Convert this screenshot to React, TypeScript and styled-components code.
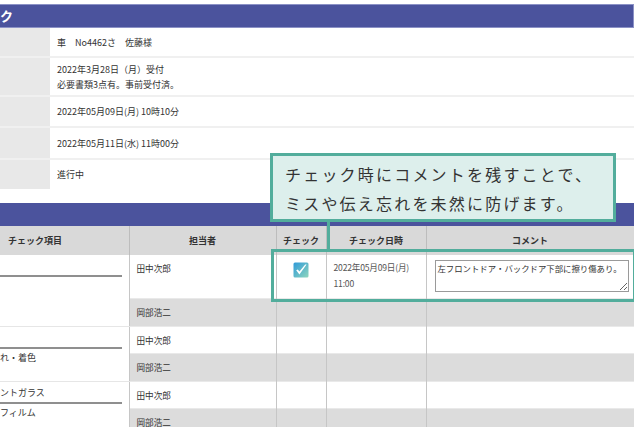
import React from 'react';
import styled, { createGlobalStyle } from 'styled-components';

const GlobalStyle = createGlobalStyle`
  body {
    margin: 0;
    background: #fff;
    font-family: 'Noto Sans CJK JP', 'Noto Sans', sans-serif;
    color: #333;
  }
`;

const infoRows = [
  { height: 30, lines: ['車　No4462さ　佐藤様'] },
  { height: 39, lines: ['2022年3月28日（月）受付', '必要書類3点有。事前受付済。'] },
  { height: 31, lines: ['2022年05月09日(月) 10時10分'] },
  { height: 32, lines: ['2022年05月11日(水) 11時00分'] },
  { height: 29, lines: ['進行中'] },
];

const groups = [
  { title: '', sub: '', first: true },
  { title: '', sub: 'れ・着色', first: false },
  { title: 'ントガラス', sub: 'フィルム', first: false },
];

const CheckIcon = () => (
  <svg width="16" height="16" viewBox="0 0 16 16">
    <defs>
      <linearGradient id="chk" x1="0" y1="0" x2="1" y2="1">
        <stop offset="0" stopColor="#2f9ad8" />
        <stop offset="1" stopColor="#8fd6bd" />
      </linearGradient>
    </defs>
    <rect x="0.5" y="0.5" width="15" height="15" rx="1.5" fill="url(#chk)" />
    <path
      d="M3.2 8.2 L6.4 12.4 L13.6 2.6 L12.2 2.6 L6.4 9.6 L4.8 7.4 Z"
      fill="#fff"
    />
  </svg>
);

const App = () => {
  return (
    <>
      <GlobalStyle />
      <Page>
        <TitleBar>ク</TitleBar>
        <InfoList>
          {infoRows.map((row, i) => (
            <InfoRow key={i} $height={row.height} $last={i === infoRows.length - 1}>
              <InfoLabel />
              <InfoValue>
                {row.lines.map((line) => (
                  <div key={line}>{line}</div>
                ))}
              </InfoValue>
            </InfoRow>
          ))}
        </InfoList>

        <SectionBar />
        <Table>
          <colgroup>
            <col style={{ width: 129 }} />
            <col style={{ width: 147 }} />
            <col style={{ width: 50 }} />
            <col style={{ width: 100 }} />
            <col style={{ width: 208 }} />
          </colgroup>
          <thead>
            <tr>
              <Th $align="left">チェック項目</Th>
              <Th>担当者</Th>
              <Th>チェック</Th>
              <Th>チェック日時</Th>
              <Th>コメント</Th>
            </tr>
          </thead>
          <tbody>
            {groups.map((g, gi) => (
              <React.Fragment key={gi}>
                <Tr $height={g.first ? 43 : 27}>
                  <ItemCell rowSpan={2}>
                    <ItemTitle>{g.title}</ItemTitle>
                    <ItemSub>{g.sub}</ItemSub>
                  </ItemCell>
                  <Td>田中次郎</Td>
                  <Td $center>{g.first && <CheckIcon />}</Td>
                  <DateCell>
                    {g.first && (
                      <>
                        <div>2022年05月09日(月)</div>
                        <div>11:00</div>
                      </>
                    )}
                  </DateCell>
                  <CommentCell>
                    {g.first && (
                      <Comment readOnly defaultValue="左フロントドア・バックドア下部に擦り傷あり。" />
                    )}
                  </CommentCell>
                </Tr>
                <Tr $height={28} $shade>
                  <Td>岡部浩二</Td>
                  <Td />
                  <Td />
                  <Td />
                </Tr>
              </React.Fragment>
            ))}
          </tbody>
        </Table>

        <Callout>
          チェック時にコメントを残すことで、
          <br />
          ミスや伝え忘れを未然に防げます。
        </Callout>
        <Connector />
        <Highlight />
      </Page>
    </>
  );
};

const Page = styled.div`
  position: relative;
  width: 634px;
  height: 427px;
  overflow: hidden;
  padding-top: 4px;
  box-sizing: border-box;
`;

const TitleBar = styled.div`
  height: 22px;
  background: #4b539d;
  border: 1px solid #8c92c6;
  border-left: none;
  color: #fff;
  font-size: 13px;
  font-weight: bold;
  line-height: 22px;
`;

const InfoList = styled.div`
  display: flex;
  flex-direction: column;
`;

const InfoRow = styled.div<{ $height: number; $last: boolean }>`
  height: ${(p) => p.$height}px;
  box-sizing: border-box;
  display: flex;
  border-bottom: ${(p) => (p.$last ? 'none' : '2px solid #f0f0f0')};
`;

const InfoLabel = styled.div`
  width: 50px;
  background: #e8e8e8;
`;

const InfoValue = styled.div`
  flex: 1;
  padding: 0 7px;
  display: flex;
  flex-direction: column;
  justify-content: center;
  font-size: 9px;
  line-height: 15px;
  color: #333;
`;

const SectionBar = styled.div`
  margin-top: 14px;
  height: 23px;
  background: #4b539d;
`;

const Table = styled.table`
  width: 634px;
  table-layout: fixed;
  border-collapse: collapse;
  font-size: 8.6px;
  color: #333;
`;

const Th = styled.th<{ $align?: string }>`
  height: 29px;
  padding: 0 0 0 ${(p) => (p.$align === 'left' ? '8px' : '0')};
  background: #d9d9d9;
  border-right: 1px solid #bdbdbd;
  text-align: ${(p) => p.$align || 'center'};
  font-weight: bold;
  font-size: 9px;
  white-space: nowrap;
`;

const Tr = styled.tr<{ $height: number; $shade?: boolean }>`
  height: ${(p) => p.$height}px;
  background: ${(p) => (p.$shade ? '#dcdcdc' : '#fff')};
  border-bottom: 1px solid #e9e9e9;
`;

const Td = styled.td<{ $center?: boolean }>`
  padding: 7px 7px 0;
  vertical-align: top;
  text-align: ${(p) => (p.$center ? 'center' : 'left')};
  border-right: 1px solid #c6c6c6;
  line-height: 12px;
`;

const ItemCell = styled.td`
  padding: 0 7px 0 0;
  vertical-align: top;
  background: #fff;
  border-right: 1px solid #c6c6c6;
  border-bottom: 1px solid #e6e6e6;
  font-size: 9px;
  white-space: nowrap;
`;

const ItemTitle = styled.div`
  height: 20px;
  line-height: 22px;
  border-bottom: 2px solid #8f8f8f;
`;

const ItemSub = styled.div`
  line-height: 18px;
`;

const DateCell = styled.td`
  padding: 4px 0 0 7px;
  vertical-align: top;
  line-height: 16px;
  border-right: 1px solid #c6c6c6;
  color: #555;
  white-space: nowrap;
  letter-spacing: -0.2px;
`;

const CommentCell = styled.td`
  padding: 5px 6px 0 8px;
  vertical-align: top;
  border-right: 1px solid #c6c6c6;
`;

const Comment = styled.textarea`
  display: block;
  box-sizing: border-box;
  width: 194px;
  height: 32px;
  padding: 1px 2px;
  border: 1px solid #9a9a9a;
  font-family: 'Noto Sans CJK JP', sans-serif;
  font-size: 8.4px;
  line-height: 12px;
  color: #333;
  resize: both;
`;

const Callout = styled.div`
  position: absolute;
  left: 270px;
  top: 153px;
  width: 346px;
  height: 69px;
  box-sizing: border-box;
  padding: 4px 0 0 12px;
  background: #ddefec;
  border: 3px solid #52ad9c;
  font-size: 16px;
  line-height: 29px;
  letter-spacing: 2.2px;
  color: #333;
  white-space: nowrap;
`;

const Connector = styled.div`
  position: absolute;
  left: 327px;
  top: 222px;
  width: 3px;
  height: 28px;
  background: #52ad9c;
`;

const Highlight = styled.div`
  position: absolute;
  left: 271px;
  top: 249px;
  width: 365px;
  height: 53px;
  box-sizing: border-box;
  border: 3px solid #52ad9c;
`;

export default App;
